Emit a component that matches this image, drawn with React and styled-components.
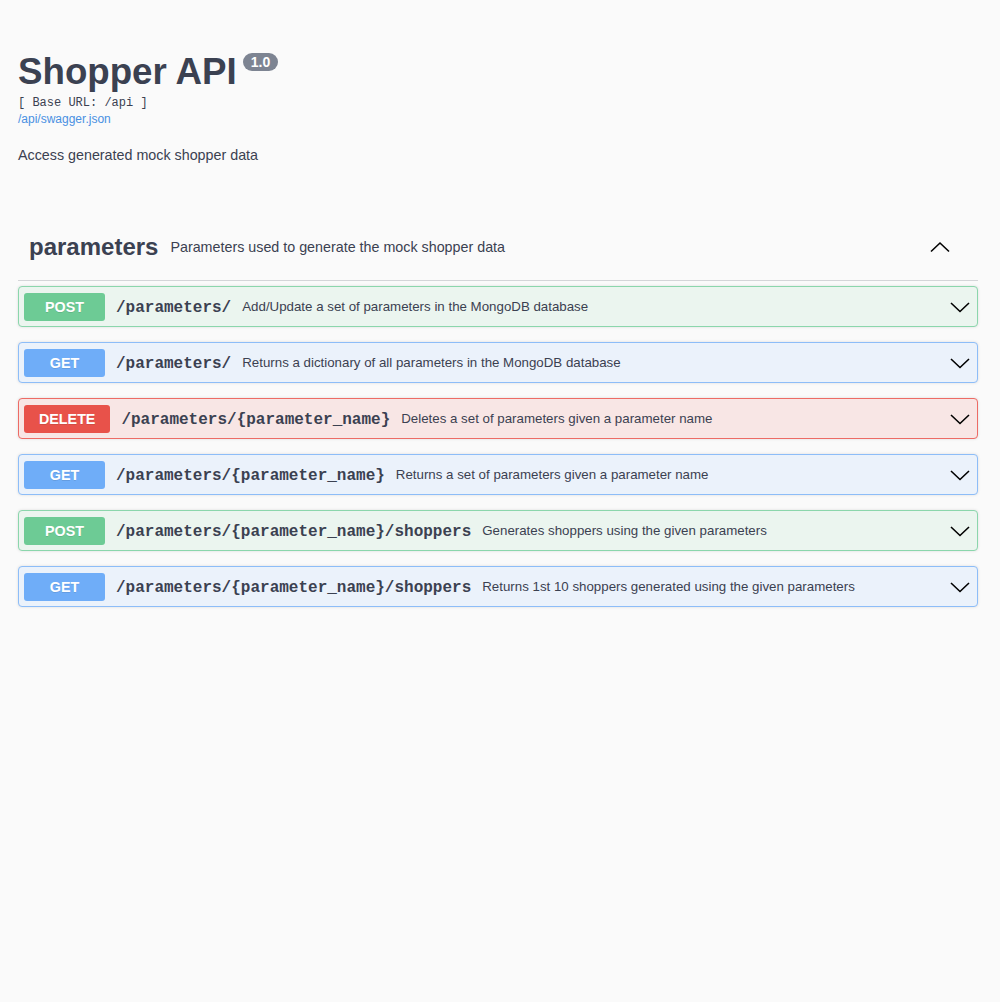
import React from "react";
import styled, { createGlobalStyle } from "styled-components";

const GlobalStyle = createGlobalStyle`
  html, body {
    margin: 0;
    padding: 0;
    background: #fafafa;
  }
  body {
    font-family: "Liberation Sans", Arial, sans-serif;
    color: #3b4151;
  }
`;

const Page = styled.div`
  width: 960px;
  padding: 0 22px 0 18px;
  min-height: 1000px;
  box-sizing: content-box;
`;

const Info = styled.div`
  padding-top: 49px;
  margin-bottom: 45px;
`;

const Title = styled.h2`
  margin: 0;
  font-size: 36.7px;
  font-weight: 700;
  line-height: 46px;
  color: #3b4151;
  display: flex;
  align-items: flex-start;
`;

const Version = styled.span`
  display: inline-block;
  margin: 4px 0 0 6px;
  padding: 2px 8px 1px;
  border-radius: 57px;
  background: #7d8492;
  color: #fff;
  font-size: 14px;
  line-height: 15px;
  font-weight: 700;
`;

const BaseUrl = styled.pre`
  margin: 1px 0 0;
  font-family: "Liberation Mono", "Courier New", monospace;
  font-size: 12px;
  line-height: 15px;
  color: #3b4151;
`;

const SpecLink = styled.a`
  display: block;
  margin-top: 1px;
  font-size: 12px;
  line-height: 15px;
  color: #4990e2;
  text-decoration: none;
`;

const Description = styled.p`
  margin: 19px 0 0;
  font-size: 14.3px;
  line-height: 18px;
`;

const TagHeader = styled.div`
  display: flex;
  align-items: center;
  height: 72px;
  box-sizing: border-box;
  padding: 14px 28px 10px 11px;
  margin-bottom: 5px;
  border-bottom: 1px solid rgba(59, 65, 81, 0.2);
`;

const TagName = styled.h3`
  margin: 0;
  font-size: 24px;
  font-weight: 700;
  color: #3b4151;
`;

const TagDesc = styled.span`
  margin-left: 12px;
  font-size: 14.3px;
  flex: 1;
  padding-top: 1px;
`;

const Arrow = styled.svg`
  width: 20px;
  height: 20px;
  flex-shrink: 0;
`;

const methodColors = {
  POST: { main: "#6dcb95", bg: "#ebf5ef", border: "#8bd6ac" },
  GET: { main: "#6fadf8", bg: "#ebf2fb", border: "#8dbdf8" },
  DELETE: { main: "#e8524a", bg: "#f8e6e5", border: "#ed6b65" },
};

const Block = styled.div`
  display: flex;
  align-items: center;
  height: 41px;
  box-sizing: border-box;
  margin-bottom: 15px;
  padding: 0 7px 0 5px;
  border: 1px solid ${(p) => methodColors[p.$method].border};
  border-radius: 4px;
  background: ${(p) => methodColors[p.$method].bg};
  box-shadow: 0 0 3px rgba(0, 0, 0, 0.12);
`;

const Method = styled.span`
  min-width: 81px;
  padding: 0 15px;
  height: 28px;
  line-height: 28px;
  box-sizing: border-box;
  text-align: center;
  border-radius: 3px;
  background: ${(p) => methodColors[p.$method].main};
  color: #fff;
  font-size: 14.3px;
  font-weight: 700;
  text-shadow: 0 1px 0 rgba(0, 0, 0, 0.1);
`;

const Path = styled.span`
  padding: 3px 11px 0 11px;
  font-family: "Liberation Mono", "Courier New", monospace;
  font-size: 16px;
  font-weight: 700;
  color: #3b4151;
  white-space: nowrap;
`;

const Summary = styled.span`
  flex: 1;
  font-size: 13.3px;
  color: #3b4151;
`;

const Chevron = ({ up }) => (
  <Arrow viewBox="0 0 20 20">
    <polyline
      points={up ? "1,14.5 10,6 19,14.5" : "1,6 10,14.5 19,6"}
      fill="none"
      stroke="#000"
      strokeWidth="1.6"
    />
  </Arrow>
);

const ops = [
  { method: "POST", path: "/parameters/", summary: "Add/Update a set of parameters in the MongoDB database" },
  { method: "GET", path: "/parameters/", summary: "Returns a dictionary of all parameters in the MongoDB database" },
  { method: "DELETE", path: "/parameters/{parameter_name}", summary: "Deletes a set of parameters given a parameter name" },
  { method: "GET", path: "/parameters/{parameter_name}", summary: "Returns a set of parameters given a parameter name" },
  { method: "POST", path: "/parameters/{parameter_name}/shoppers", summary: "Generates shoppers using the given parameters" },
  { method: "GET", path: "/parameters/{parameter_name}/shoppers", summary: "Returns 1st 10 shoppers generated using the given parameters" },
];

export default function App() {
  return (
    <>
      <GlobalStyle />
      <Page>
        <Info>
          <Title>
            Shopper API<Version>1.0</Version>
          </Title>
          <BaseUrl>[ Base URL: /api ]</BaseUrl>
          <SpecLink href="#">/api/swagger.json</SpecLink>
          <Description>Access generated mock shopper data</Description>
        </Info>
        <div>
          <TagHeader>
            <TagName>parameters</TagName>
            <TagDesc>Parameters used to generate the mock shopper data</TagDesc>
            <Chevron up />
          </TagHeader>
          {ops.map((op, i) => (
            <Block key={i} $method={op.method}>
              <Method $method={op.method}>{op.method}</Method>
              <Path>{op.path}</Path>
              <Summary>{op.summary}</Summary>
              <Chevron />
            </Block>
          ))}
        </div>
      </Page>
    </>
  );
}
